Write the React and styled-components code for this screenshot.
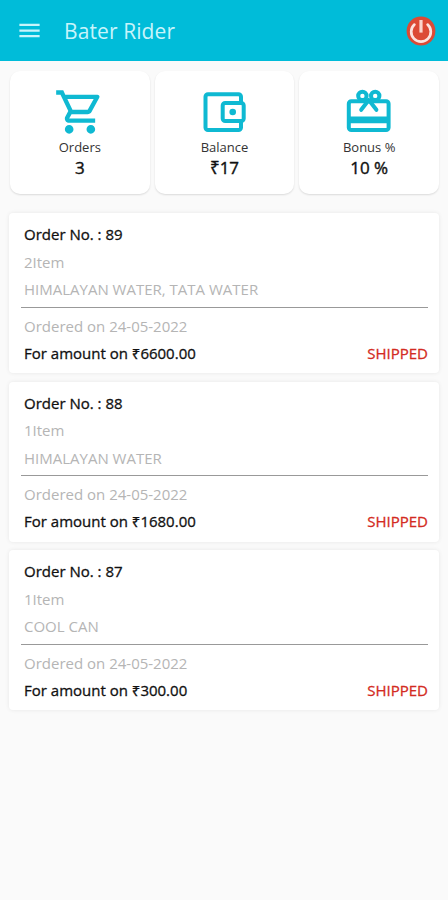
import styled, { createGlobalStyle } from "styled-components";
import { MdMenu, MdOutlineShoppingCart } from "react-icons/md";

const COLORS = {
  primary: "#0fb9d2",
  header: "#00bcd9",
  background: "#fafafa",
  text: "#111111",
  muted: "#b5b5b5",
  danger: "#d32a22",
};

const CartIcon = () => <MdOutlineShoppingCart size={52} color={COLORS.primary} />;

const WalletIcon = () => (
  <svg width="52" height="52" viewBox="0 0 52 52" fill="none">
    <g stroke={COLORS.primary} strokeWidth="4">
      <rect x="7.5" y="8.3" width="35.5" height="35.7" rx="2.5" />
      <rect x="24.7" y="17" width="21" height="18" rx="2.5" fill="white" />
    </g>
    <circle cx="34.7" cy="26" r="3.3" fill={COLORS.primary} />
  </svg>
);

const GiftIcon = () => (
  <svg width="52" height="52" viewBox="0 0 52 52" fill="none">
    <g stroke={COLORS.primary} strokeWidth="4">
      <rect x="5.8" y="15.2" width="39.8" height="28.8" rx="2.5" />
      <circle cx="19.4" cy="9.9" r="4.2" fill="white" />
      <circle cx="32.2" cy="9.9" r="4.2" fill="white" />
      <path d="M25.8 14L18.2 23.8M25.8 14L33.4 23.8" strokeLinecap="round" />
    </g>
    <path d="M6 30.5H46V37.3H6Z" fill={COLORS.primary} />
  </svg>
);

const PowerIcon = () => (
  <svg width="30" height="30" viewBox="0 0 30 30" fill="none">
    <circle cx="15" cy="15" r="14.4" fill="#dc4a35" />
    <path
      d="M8.4 8.6A9.8 9.8 0 1 0 21.6 8.6"
      stroke="#fbe3df"
      strokeWidth="2.7"
      strokeLinecap="round"
    />
    <path d="M15 4V16.6" stroke="#fbd5cd" strokeWidth="3.2" />
  </svg>
);

const stats = [
  { id: 1, label: "Orders", value: "3", icon: CartIcon },
  { id: 2, label: "Balance", value: "₹17", icon: WalletIcon },
  { id: 3, label: "Bonus %", value: "10 %", icon: GiftIcon },
];

const orders = [
  {
    id: 89,
    count: 2,
    items: "HIMALAYAN WATER, TATA WATER",
    date: "24-05-2022",
    amount: "6600.00",
    status: "SHIPPED",
  },
  {
    id: 88,
    count: 1,
    items: "HIMALAYAN WATER",
    date: "24-05-2022",
    amount: "1680.00",
    status: "SHIPPED",
  },
  {
    id: 87,
    count: 1,
    items: "COOL CAN",
    date: "24-05-2022",
    amount: "300.00",
    status: "SHIPPED",
  },
];

const App = () => {
  return (
    <Wrapper>
      <GlobalStyle />
      <Header>
        <MenuButton aria-label="menu">
          <MdMenu size={27} />
        </MenuButton>
        <Title>Bater Rider</Title>
        <PowerButton aria-label="logout">
          <PowerIcon />
        </PowerButton>
      </Header>
      <Stats>
        {stats.map(({ id, label, value, icon: Icon }) => (
          <StatCard key={id}>
            <Icon />
            <StatLabel>{label}</StatLabel>
            <StatValue>{value}</StatValue>
          </StatCard>
        ))}
      </Stats>
      <OrderList>
        {orders.map((order) => (
          <OrderCard key={order.id}>
            <Line $strong>Order No. : {order.id}</Line>
            <Line>{order.count}Item</Line>
            <Line>{order.items}</Line>
            <Border />
            <Line>Ordered on {order.date}</Line>
            <AmountRow>
              <Line $strong>For amount on ₹{order.amount}</Line>
              <Status>{order.status}</Status>
            </AmountRow>
          </OrderCard>
        ))}
      </OrderList>
    </Wrapper>
  );
};

const GlobalStyle = createGlobalStyle`
  * {
    box-sizing: border-box;
  }

  body {
    margin: 0;
    background: ${COLORS.background};
    font-family: "Open Sans", "Noto Sans", sans-serif;
  }
`;

const Wrapper = styled.main`
  width: 100%;
  min-height: 900px;

  background: ${COLORS.background};
`;

const Header = styled.header`
  height: 61px;
  padding: 0 12px 0 16px;

  display: flex;
  align-items: center;

  background: ${COLORS.header};
`;

const MenuButton = styled.button`
  padding: 0;

  display: flex;

  background: none;
  border: none;
  color: #c8f4fb;
`;

const Title = styled.h1`
  margin: 0 auto 0 21px;

  font-size: 21px;
  font-weight: 400;
  line-height: 28px;
  letter-spacing: 0.1px;

  color: #c8f4fb;
`;

const PowerButton = styled(MenuButton)``;

const Stats = styled.section`
  padding: 10px 9px 0 10px;

  display: grid;
  grid-template-columns: repeat(3, 1fr);
  gap: 5px;
`;

const StatCard = styled.div`
  height: 123px;
  padding-top: 15px;

  display: flex;
  flex-direction: column;
  align-items: center;

  background: white;
  border-radius: 10px;
  box-shadow: 0 1px 2px rgba(0, 0, 0, 0.13);
`;

const StatLabel = styled.span`
  margin-top: -1px;

  font-size: 13px;
  line-height: 20px;

  color: #333333;
`;

const StatValue = styled.span`
  font-size: 17px;
  line-height: 22px;
  -webkit-text-stroke: 0.4px ${COLORS.text};

  color: ${COLORS.text};
`;

const OrderList = styled.section`
  padding: 19px 9px 0;

  display: flex;
  flex-direction: column;
  gap: 8.5px;
`;

const OrderCard = styled.article`
  height: 160px;
  padding: 8px 11px 0 12px;

  background: white;
  border-radius: 4px;
  box-shadow: 0 0 4px rgba(0, 0, 0, 0.08);
`;

const Line = styled.p`
  margin: 0;
  padding-left: 3px;

  font-size: 15px;
  line-height: 27.5px;
  -webkit-text-stroke: ${(props) => (props.$strong ? "0.3px" : "0")};

  color: ${(props) => (props.$strong ? COLORS.text : COLORS.muted)};
`;

const Border = styled.hr`
  height: 1px;
  margin: 3px 0 5px;

  border: none;
  background: #999999;
`;

const AmountRow = styled.div`
  height: 27px;

  display: flex;
  align-items: center;
  justify-content: space-between;
`;

const Status = styled.span`
  font-size: 15px;
  line-height: 27.5px;
  -webkit-text-stroke: 0.3px;

  color: ${COLORS.danger};
`;

export default App;
